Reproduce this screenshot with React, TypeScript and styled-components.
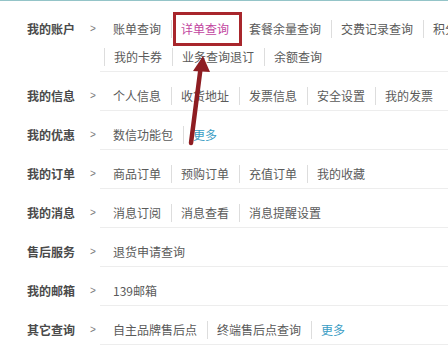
import React from "react";
import styled, { createGlobalStyle } from "styled-components";

const Global = createGlobalStyle`
  html, body { margin: 0; padding: 0; background: #fff; overflow: hidden; }
  body { font-family: "Noto Sans CJK SC", "Microsoft YaHei", sans-serif; }
`;

const Page = styled.div`
  position: relative;
  width: 530px;
  height: 352px;
  border-top: 1px solid #94c4c8;
  padding-top: 4px;
  box-sizing: border-box;
`;

const Row = styled.div`
  display: flex;
  align-items: stretch;
`;

const Head = styled.div`
  display: flex;
  width: 100px;
  flex: 0 0 100px;
  padding: 15px 0 0 27px;
  box-sizing: border-box;
`;

const Label = styled.span`
  width: 63px;
  font-size: 12px;
  line-height: 18px;
  height: 18px;
  font-weight: 700;
  color: #4a4a4a;
`;

const Chevron = styled.span`
  font-family: "Liberation Sans", Arial, sans-serif;
  font-size: 10px;
  line-height: 18px;
  height: 18px;
  color: #7a7a7a;
`;

const Body = styled.div`
  flex: 1;
  display: flex;
  flex-wrap: wrap;
  row-gap: 10px;
  align-content: flex-start;
  padding: 15px 0 5px 4px;
  border-bottom: 1px solid #ededed;
`;

const Item = styled.span<{ $accent?: "pink" | "blue" }>`
  display: inline-block;
  font-size: 12px;
  line-height: 18px;
  height: 18px;
  padding: 0 10px 0 9px;
  white-space: nowrap;
  color: ${(p) => (p.$accent === "pink" ? "#c2459f" : p.$accent === "blue" ? "#3a9dc4" : "#5a5a5a")};
  & + & { border-left: 1px solid #dddddd; }
`;

const Highlight = styled.div`
  position: absolute;
  left: 173px;
  top: 11px;
  width: 69px;
  height: 34px;
  border: 3px solid #a8262c;
  box-sizing: border-box;
`;

const ArrowSvg = styled.svg`
  position: absolute;
  left: 0;
  top: 0;
  pointer-events: none;
`;

type RowData = { label: string; items: { t: string; a?: "pink" | "blue" }[] };

const rows: RowData[] = [
  {
    label: "我的账户",
    items: [
      { t: "账单查询" },
      { t: "详单查询", a: "pink" },
      { t: "套餐余量查询" },
      { t: "交费记录查询" },
      { t: "积分查询" },
      { t: "我的卡券" },
      { t: "业务查询退订" },
      { t: "余额查询" },
    ],
  },
  { label: "我的信息", items: [{ t: "个人信息" }, { t: "收货地址" }, { t: "发票信息" }, { t: "安全设置" }, { t: "我的发票" }] },
  { label: "我的优惠", items: [{ t: "数信功能包" }, { t: "更多", a: "blue" }] },
  { label: "我的订单", items: [{ t: "商品订单" }, { t: "预购订单" }, { t: "充值订单" }, { t: "我的收藏" }] },
  { label: "我的消息", items: [{ t: "消息订阅" }, { t: "消息查看" }, { t: "消息提醒设置" }] },
  { label: "售后服务", items: [{ t: "退货申请查询" }] },
  { label: "我的邮箱", items: [{ t: "139邮箱" }] },
  { label: "其它查询", items: [{ t: "自主品牌售后点" }, { t: "终端售后点查询" }, { t: "更多", a: "blue" }] },
];

export default function App() {
  return (
    <>
      <Global />
      <Page>
        {rows.map((r) => (
          <Row key={r.label}>
            <Head>
              <Label>{r.label}</Label>
              <Chevron>&gt;</Chevron>
            </Head>
            <Body>
              {r.items.map((it) => (
                <Item key={it.t} $accent={it.a}>
                  {it.t}
                </Item>
              ))}
            </Body>
          </Row>
        ))}
        <Highlight />
        <ArrowSvg width="448" height="352" viewBox="0 0 448 352">
          <line x1="191" y1="142" x2="201" y2="64" stroke="#8e1d22" strokeWidth="4.5" strokeLinecap="round" />
          <polygon points="203,55 193,70 210,71" fill="#8e1d22" />
        </ArrowSvg>
      </Page>
    </>
  );
}
